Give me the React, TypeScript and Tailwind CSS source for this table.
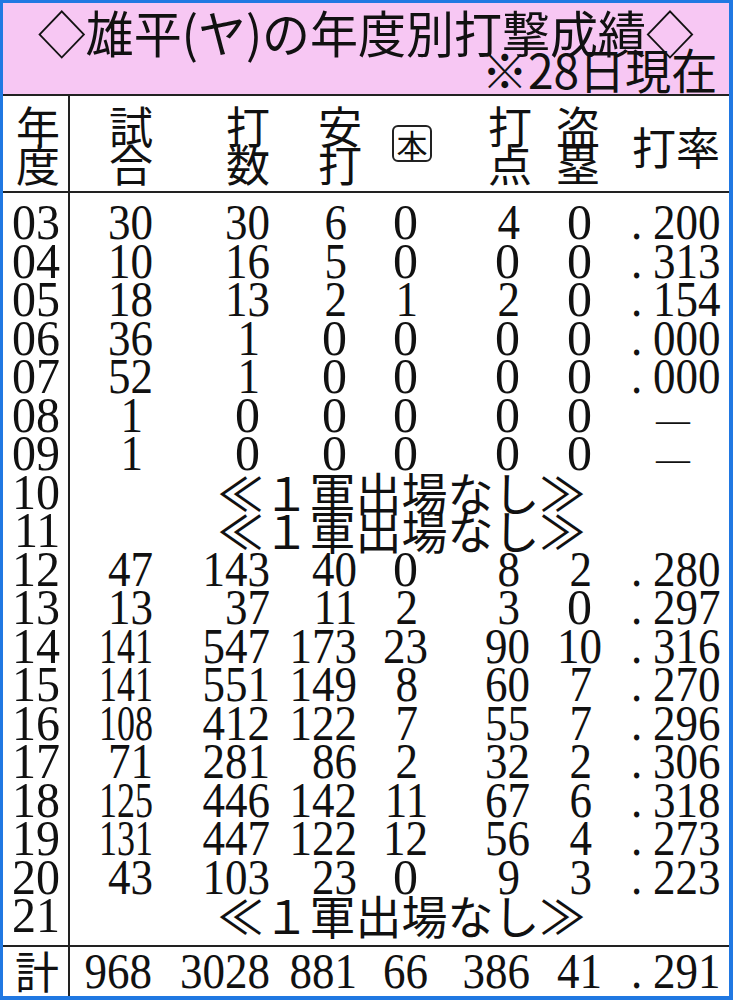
import React from "react";

type Row = { year: string; stats: string[] | null };

const rows: Row[] = [
  { year: "03", stats: ["30", "30", "6", "0", "4", "0", ".200"] },
  { year: "04", stats: ["10", "16", "5", "0", "0", "0", ".313"] },
  { year: "05", stats: ["18", "13", "2", "1", "2", "0", ".154"] },
  { year: "06", stats: ["36", "1", "0", "0", "0", "0", ".000"] },
  { year: "07", stats: ["52", "1", "0", "0", "0", "0", ".000"] },
  { year: "08", stats: ["1", "0", "0", "0", "0", "0", "—"] },
  { year: "09", stats: ["1", "0", "0", "0", "0", "0", "—"] },
  { year: "10", stats: null },
  { year: "11", stats: null },
  { year: "12", stats: ["47", "143", "40", "0", "8", "2", ".280"] },
  { year: "13", stats: ["13", "37", "11", "2", "3", "0", ".297"] },
  { year: "14", stats: ["141", "547", "173", "23", "90", "10", ".316"] },
  { year: "15", stats: ["141", "551", "149", "8", "60", "7", ".270"] },
  { year: "16", stats: ["108", "412", "122", "7", "55", "7", ".296"] },
  { year: "17", stats: ["71", "281", "86", "2", "32", "2", ".306"] },
  { year: "18", stats: ["125", "446", "142", "11", "67", "6", ".318"] },
  { year: "19", stats: ["131", "447", "122", "12", "56", "4", ".273"] },
  { year: "20", stats: ["43", "103", "23", "0", "9", "3", ".223"] },
  { year: "21", stats: null },
];

const total = ["968", "3028", "881", "66", "386", "41", ".291"];

// column widths, data area starts right after the year column
const widths = ["w-[83px]", "w-[117px]", "w-[87px]", "w-[71px]", "w-[102px]", "w-[72px]", "w-[118px]"];

const serif = "font-['Liberation_Serif',serif]";
const gothic = "font-['Noto_Sans_CJK_JP','Noto_Sans',sans-serif]";

const Num = ({ v, squeeze }: { v: string; squeeze?: boolean }) => {
  if (v === "—") {
    return <span className="inline-block pr-[30px] text-[34px] leading-none align-middle">—</span>;
  }
  if (v.startsWith(".")) {
    return (
      <span className="inline-block origin-right scale-x-[0.9]">
        <span className="mr-[12px]">.</span>
        {v.slice(1)}
      </span>
    );
  }
  if (v.length === 1) {
    return <span className={v === "0" ? "inline-block pr-[10px]" : "inline-block origin-right scale-x-[0.9] pr-[11px]"}>{v}</span>;
  }
  if (squeeze && v.length === 3) {
    return <span className="inline-block origin-right scale-x-[0.72]">{v}</span>;
  }
  return <span className="inline-block origin-right scale-x-[0.9]">{v}</span>;
};

const Stack = ({ a, b, extra = "" }: { a: string; b: string; extra?: string }) => (
  <div className={`flex flex-col leading-[38px] ${extra}`}>
    <span>{a}</span>
    <span>{b}</span>
  </div>
);

export default function App() {
  return (
    <div className="w-[733px] h-[1000px] overflow-hidden bg-white border-[#2078e2] border-t-[3px] border-l-[3px] border-r-[4px] border-b-[4px] flex flex-col text-[#111]">
      {/* title */}
      <div className={`bg-[#f7c7f3] h-[93px] shrink-0 overflow-hidden border-b-2 border-[#222] pt-[5px] ${gothic}`}>
        <div className="text-center text-[50px] leading-[46px] whitespace-nowrap">
          <span className="inline-block scale-x-[0.96]">◇雄平(ヤ)の年度別打撃成績◇</span>
        </div>
        <div className="-mt-[6px] text-right text-[48px] leading-[40px] pr-[12px] whitespace-nowrap">
          <span className="inline-block origin-right scale-x-[0.96]">※28日現在</span>
        </div>
      </div>

      {/* header row */}
      <div className={`flex h-[97px] shrink-0 border-b-2 border-[#222] text-[44px] ${gothic}`}>
        <div className="w-[67px] border-r-2 border-[#222] flex items-center justify-end pr-[8px]">
          <Stack a="年" b="度" />
        </div>
        <div className={`${widths[0]} flex items-center justify-end`}>
          <Stack a="試" b="合" />
        </div>
        <div className={`${widths[1]} flex items-center justify-end`}>
          <Stack a="打" b="数" />
        </div>
        <div className={`${widths[2]} flex items-center justify-end`}>
          <Stack a="安" b="打" extra="-mr-[5px]" />
        </div>
        <div className={`${widths[3]} flex items-center justify-end`}>
          <span className="-mr-[4px] flex w-[40px] h-[37px] items-center justify-center rounded-[6px] border-2 border-[#222] text-[31px] leading-none">
            本
          </span>
        </div>
        <div className={`${widths[4]} flex items-center justify-end`}>
          <Stack a="打" b="点" extra="-mr-[2px]" />
        </div>
        <div className={`${widths[5]} flex items-center justify-end`}>
          <Stack a="盗" b="塁" extra="mr-[2px]" />
        </div>
        <div className={`${widths[6]} flex items-center justify-end leading-none`}>
          <span className="pt-[4px]">打率</span>
        </div>
      </div>

      {/* yearly rows */}
      <div className={`flex shrink-0 border-b-2 border-[#222] text-[50px] ${serif}`}>
        <div className="w-[67px] border-r-2 border-[#222] py-[10px] pr-[8px] text-right">
          {rows.map((r) => (
            <div key={r.year} className="h-[38.5px] leading-[38.5px]">
              <span className="inline-block origin-right scale-x-[0.96]">{r.year}</span>
            </div>
          ))}
        </div>
        <div className="flex-1 py-[10px]">
          {rows.map((r) => (
            <div key={r.year} className="flex h-[38.5px] leading-[38.5px]">
              {r.stats ? (
                r.stats.map((v, j) => (
                  <div key={j} className={`${widths[j]} text-right`}>
                    <Num v={v} squeeze={j === 0} />
                  </div>
                ))
              ) : (
                <div className={`flex-1 text-center text-[46px] leading-[36px] pl-[4px] ${gothic}`}>≪１軍出場なし≫</div>
              )}
            </div>
          ))}
        </div>
      </div>

      {/* total row */}
      <div className={`flex h-[49.5px] shrink-0 text-[50px] leading-[49px] ${serif}`}>
        <div className={`w-[67px] h-full border-r-2 border-[#222] text-right pr-[9px] text-[44px] leading-[46px] ${gothic}`}>
          計
        </div>
        {total.map((v, j) => (
          <div key={j} className={`${widths[j]} text-right ${j === 0 ? "pr-[1px]" : ""}`}>
            <Num v={v} />
          </div>
        ))}
      </div>
    </div>
  );
}
